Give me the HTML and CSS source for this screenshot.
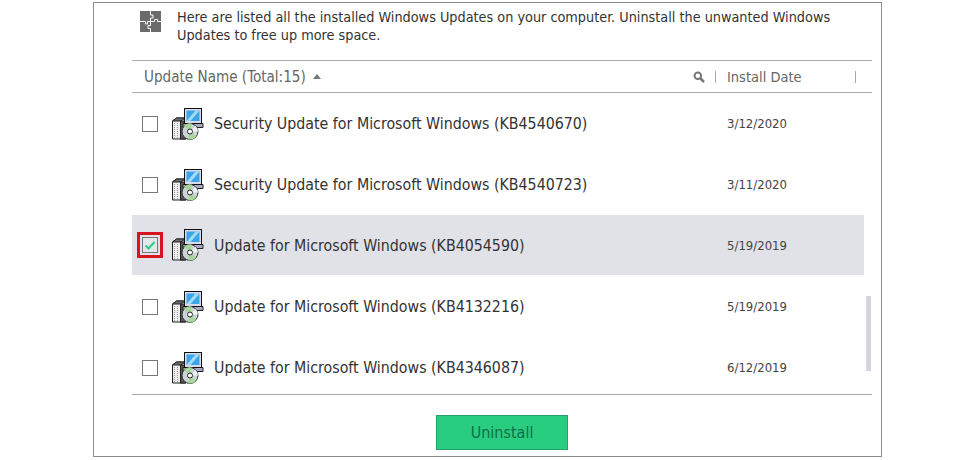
FILE: index.html
```html
<!DOCTYPE html>
<html lang="en">
<head>
<meta charset="utf-8">
<title>Windows Updates</title>
<link rel="stylesheet" href="styles.css">
</head>
<body>
<svg class="defs" width="0" height="0" aria-hidden="true">
  <defs>
    <symbol id="pkg" viewBox="0 0 32 32">
      <path d="M.5 13l4-3h9v21h-13z" fill="#ececec" stroke="#222"/>
      <path d="M.5 13l4-3h9l-5 3z" fill="#6f6f6f" stroke="#222"/>
      <rect x="8.500" y="13" width="5" height="18" fill="#555" stroke="#222"/>
      <path d="M2.500 15v15M5.500 15v15" stroke="#a0a0a0" stroke-dasharray="1 1"/>
      <path d="M16 15.500h-5v4h20v-4z" fill="#a9a9c2" stroke="#222"/>
      <rect x="12.500" y=".5" width="17" height="15" fill="#d9d9ec" stroke="#111"/>
      <rect x="14.500" y="2.500" width="13" height="10.500" fill="#3aa5e8"/>
      <path d="M14.500 13l9-10.500h4l-9 10.500z" fill="#a4dcf7"/>
      <circle cx="18" cy="23.500" r="8" fill="#ccd3d6" stroke="#333"/>
      <path d="M18 23.500L12 18a8 8 0 0 1 8-2.300zM18 23.500l6 5.300a8 8 0 0 1-8 2.400z" fill="#a5d898"/>
      <path d="M18 23.500L23.500 18a8 8 0 0 1 2.400 5.500z" fill="#eef2f3"/>
      <circle cx="18" cy="23.500" r="2.500" fill="#fff" stroke="#222"/>
    </symbol>
  </defs>
</svg>
<main class="window">
  <header class="intro">
    <svg class="puzzle" viewBox="0 0 21 21" aria-hidden="true">
      <rect width="21" height="21" fill="#6b6b6b"/>
      <path fill="none" stroke="#fff" d="M10.500 0v4h2.500v3h-2.500v3.500h-3v2.500h-2v-2.500h-5.500M10.500 10.500h4v-2h3v2h3.500M10.500 10.500v4h-2.500v3h2.500v3.500"/>
    </svg>
    <p class="intro-text">Here are listed all the installed Windows Updates on your computer. Uninstall the unwanted Windows Updates to free up more space.</p>
  </header>
  <div class="table-head">
    <span class="col-name">Update Name (Total:15)<i class="sort-arrow"></i></span>
    <svg class="search" viewBox="0 0 12 12" aria-hidden="true"><circle cx="4.800" cy="4.800" r="3.300" fill="none" stroke="#777" stroke-width="2"/><path d="M7.500 7.500l3.500 3.500" stroke="#777" stroke-width="2.500"/></svg>
    <i class="sep"></i>
    <span class="col-date">Install Date</span>
    <i class="sep"></i>
  </div>
  <div class="list">
    <div class="rows">
      <div class="row"><span class="check"></span><svg class="pkg"><use href="#pkg"/></svg><span class="name">Security Update for Microsoft Windows (KB4540670)</span><span class="date">3/12/2020</span></div>
      <div class="row"><span class="check"></span><svg class="pkg"><use href="#pkg"/></svg><span class="name">Security Update for Microsoft Windows (KB4540723)</span><span class="date">3/11/2020</span></div>
      <div class="row selected"><span class="mark"><span class="check checked"><svg viewBox="0 0 14 14" aria-hidden="true"><path d="M2.500 7.500l3 3 6-6.500" fill="none" stroke="#2ecc87" stroke-width="2"/></svg></span></span><svg class="pkg"><use href="#pkg"/></svg><span class="name">Update for Microsoft Windows (KB4054590)</span><span class="date">5/19/2019</span></div>
      <div class="row"><span class="check"></span><svg class="pkg"><use href="#pkg"/></svg><span class="name">Update for Microsoft Windows (KB4132216)</span><span class="date">5/19/2019</span></div>
      <div class="row"><span class="check"></span><svg class="pkg"><use href="#pkg"/></svg><span class="name">Update for Microsoft Windows (KB4346087)</span><span class="date">6/12/2019</span></div>
    </div>
    <div class="scrollbar"><div class="thumb"></div></div>
  </div>
  <footer class="actions"><button class="uninstall" type="button">Uninstall</button></footer>
</main>
</body>
</html>
```
FILE: styles.css
```css
* { box-sizing: border-box; }
html, body { margin: 0; padding: 0; background: #fff; }
body { padding: 2px 0 0 93px; width: 975px; height: 460px; overflow: hidden; font-family: "DejaVu Sans Condensed", "DejaVu Sans", sans-serif; }
.defs { position: absolute; }
.window { width: 789px; height: 455px; border: 1px solid #8c8c8c; padding: 0 9px 0 38px; display: flex; flex-direction: column; }
.intro { height: 57px; display: flex; padding: 5px 0 0 8px; }
.puzzle { width: 21px; height: 21px; margin-top: 3px; flex: none; }
.intro-text { margin: 0 0 0 16px; width: 680px; font-size: 14.300px; line-height: 18px; color: #333; }
.table-head { height: 33px; border-top: 1px solid #aaa; border-bottom: 1px solid #aaa; display: flex; align-items: center; padding: 0 16px 0 12px; color: #666; font-size: 14.500px; }
.col-name { flex: 1; display: flex; align-items: center; font-size: 15.100px; }
.sort-arrow { width: 0; height: 0; margin-left: 7px; border: 4px solid transparent; border-top: 0; border-bottom: 5px solid #777; }
.search { width: 12px; height: 12px; margin-right: 10px; }
.sep { width: 1px; height: 12px; background: #aaa; }
.col-date { width: 139px; padding-left: 11px; }
.list { height: 302px; border-bottom: 1px solid #aaa; display: flex; overflow: hidden; }
.rows { width: 732px; flex: none; }
.row { height: 61px; display: flex; align-items: center; padding-left: 10px; }
.check { width: 16px; height: 16px; border: 1px solid #777; background: #fff; flex: none; display: block; }
.selected { height: 60px; margin-bottom: 1px; background: #e0e2e8; padding-left: 5px; }
.mark { border: 3px solid #d8141e; padding: 2px; width: 26px; height: 26px; flex: none; margin-right: -5px; }
.checked { width: 16px; height: 16px; border-color: #777; background: #e4e6ea; }
.checked svg { display: block; width: 14px; height: 14px; }
.pkg { width: 32px; height: 32px; margin-left: 14px; flex: none; }
.name { margin-left: 10px; font-size: 15.800px; color: #333; flex: 1; white-space: nowrap; }
.date { width: 137px; font-size: 13px; color: #444; flex: none; }
.scrollbar { flex: 1; padding: 203px 0 0 2px; }
.thumb { width: 5px; height: 75px; background: #d3d6e2; }
.actions { flex: 1; display: flex; justify-content: center; padding: 20px 0 0; }
.uninstall { width: 132px; height: 35px; border: 1px solid #27a26c; background: #28cd7f; color: #0e6e47; font: inherit; font-size: 16px; padding: 0; }
```
